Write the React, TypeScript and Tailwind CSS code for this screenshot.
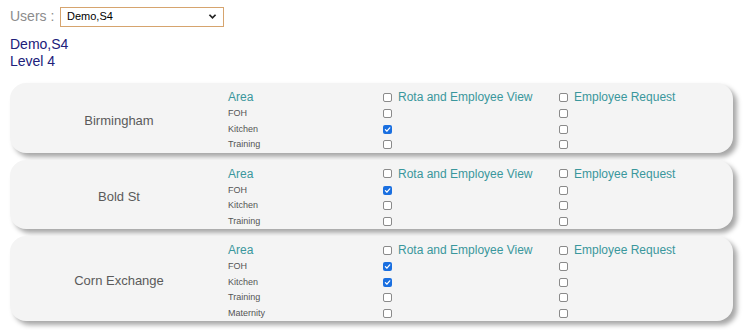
import React from "react";

type Loc = { name: string; rows: { area: string; rota: boolean; req: boolean }[] };

const data: Loc[] = [
  {
    name: "Birmingham",
    rows: [
      { area: "FOH", rota: false, req: false },
      { area: "Kitchen", rota: true, req: false },
      { area: "Training", rota: false, req: false },
    ],
  },
  {
    name: "Bold St",
    rows: [
      { area: "FOH", rota: true, req: false },
      { area: "Kitchen", rota: false, req: false },
      { area: "Training", rota: false, req: false },
    ],
  },
  {
    name: "Corn Exchange",
    rows: [
      { area: "FOH", rota: true, req: false },
      { area: "Kitchen", rota: true, req: false },
      { area: "Training", rota: false, req: false },
      { area: "Maternity", rota: false, req: false },
    ],
  },
];

function Box({ checked }: { checked: boolean }) {
  if (checked) {
    return (
      <span className="inline-flex h-[9px] w-[9px] items-center justify-center rounded-[2px] bg-[#1a6fe0]">
        <svg width="7" height="7" viewBox="0 0 10 10">
          <path d="M2 5.2 L4.2 7.4 L8.2 2.6" fill="none" stroke="white" strokeWidth="1.8" strokeLinecap="round" strokeLinejoin="round" />
        </svg>
      </span>
    );
  }
  return <span className="inline-block h-[9px] w-[9px] rounded-[2px] border border-[#8a8a8a] bg-white" />;
}

export default function App() {
  return (
    <div className="min-h-[330px] bg-white pl-[10px] pt-[6px]" style={{ fontFamily: '"Liberation Sans", Arial, sans-serif' }}>
      <div className="flex items-center">
        <span className="w-[50px] text-[14px] text-[#8c8c8c]">Users :</span>
        <div className="flex h-[20px] w-[164px] items-center justify-between border border-[#d6a46e] bg-white pl-[6px] pr-[6px]">
          <span className="text-[11px] text-black">Demo,S4</span>
          <svg width="9" height="7" viewBox="0 0 10 8">
            <path d="M1.5 2 L5 5.5 L8.5 2" fill="none" stroke="#222" strokeWidth="2" />
          </svg>
        </div>
      </div>
      <div className="mt-[9px] text-[14px] leading-[17px] text-[#20207a]">Demo,S4</div>
      <div className="text-[14px] leading-[17px] text-[#20207a]">Level 4</div>
      <div className="mt-[13px] flex w-[723px] flex-col gap-[7px]">
        {data.map((loc) => (
          <div
            key={loc.name}
            className="flex rounded-[16px] bg-[#f4f4f4] pt-[5px] shadow-[4px_4px_5px_rgba(0,0,0,0.35)]"
          >
            <div className="flex w-[218px] items-center justify-center text-[13px] text-[#5a5a5a]">{loc.name}</div>
            <div className="flex-1">
              <div className="flex h-[18px] items-center">
                <div className="w-[155px] text-[12px] text-[#3a979c]">Area</div>
                <div className="flex w-[176px] items-center gap-[6px]">
                  <Box checked={false} />
                  <span className="text-[12px] text-[#3a979c]">Rota and Employee View</span>
                </div>
                <div className="flex items-center gap-[6px]">
                  <Box checked={false} />
                  <span className="text-[12px] text-[#3a979c]">Employee Request</span>
                </div>
              </div>
              {loc.rows.map((r) => (
                <div key={r.area} className="flex h-[15.5px] items-center">
                  <div className="w-[155px] text-[9px] text-[#555]">{r.area}</div>
                  <div className="flex w-[176px] items-center">
                    <Box checked={r.rota} />
                  </div>
                  <div className="flex items-center">
                    <Box checked={r.req} />
                  </div>
                </div>
              ))}
            </div>
          </div>
        ))}
      </div>
    </div>
  );
}
